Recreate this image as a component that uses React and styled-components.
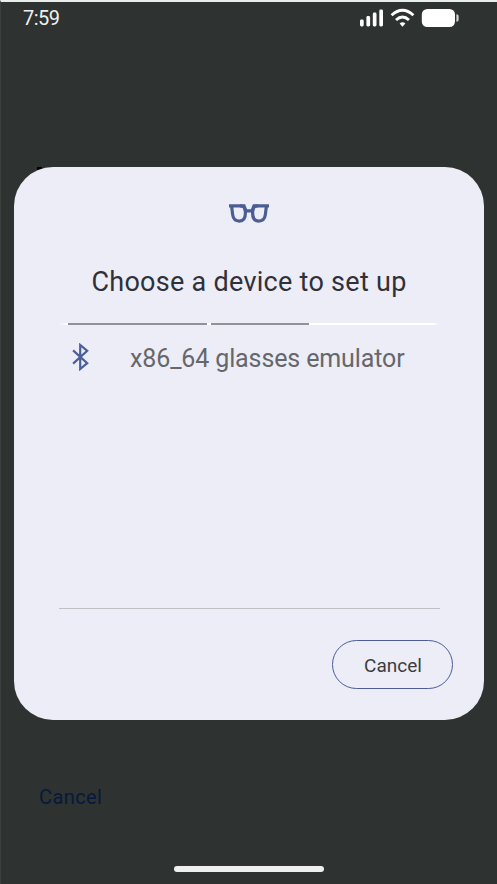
import React from 'react';
import styled, { createGlobalStyle } from 'styled-components';

const App = () => {
  return (
    <>
      <GlobalStyle />
      <Screen>
        <StatusBar>
          <Clock>7:59</Clock>
          <StatusIcons />
        </StatusBar>
        <Dialog role="dialog">
          <GlassesIcon />
          <Title>Choose a device to set up</Title>
          <Progress>
            <Segment $width="139px" />
            <Segment $width="98px" />
          </Progress>
          <DeviceList>
            <Device>
              <BluetoothIcon />
              <DeviceName>x86_64 glasses emulator</DeviceName>
            </Device>
          </DeviceList>
          <Actions>
            <CancelButton>Cancel</CancelButton>
          </Actions>
        </Dialog>
        <Footer>
          <BackLink>Cancel</BackLink>
        </Footer>
        <HomeBar />
      </Screen>
    </>
  );
};

//Icons
const StatusIcons = () => (
  <svg width="102" height="20" viewBox="0 0 102 20" fill="#fff">
    <rect x="1" y="11.5" width="3.7" height="7" rx="1.4" />
    <rect x="7.4" y="8" width="3.7" height="10.5" rx="1.4" />
    <rect x="13.8" y="4.5" width="3.7" height="14" rx="1.4" />
    <rect x="20.3" y="1.5" width="3.7" height="17" rx="1.4" />
    <g fill="none" stroke="#fff" strokeWidth="2.9">
      <path d="M32.6 7.2Q43.5-2.8 54.4 7.2" />
      <path d="M37 12Q43.5 6 50 12" />
    </g>
    <path d="M40.6 15.6Q43.5 12.8 46.4 15.6L43.5 18.7Z" />
    <rect x="62.8" y="1" width="33.2" height="18" rx="5.5" />
    <path d="M97.4 6.2Q99.6 6.2 99.6 8V12Q99.6 13.8 97.4 13.8Z" fill="#d5d8d7" />
  </svg>
);

const GlassesIcon = () => (
  <svg width="42" height="22" viewBox="0 0 42 22" fill="none" stroke="#4b5d93" strokeWidth="3.2">
    <path d="M1 3.8H12.6C16 3.8 17.4 5.6 17.4 9V11C17.4 16.4 15 19.1 11.4 19.1C7.8 19.1 5.2 17 4.6 12.4L3.6 3.8" />
    <path d="M41 3.8H29.4C26 3.8 24.6 5.6 24.6 9V11C24.6 16.4 27 19.1 30.6 19.1C34.2 19.1 36.8 17 37.4 12.4L38.4 3.8" />
    <path d="M12 3.8H16L17.4 8.8H24.6L26 3.8H30" />
  </svg>
);

const BluetoothIcon = () => (
  <svg width="18" height="28" viewBox="0 0 18 28" fill="none" stroke="#4b5f98" strokeWidth="2.2">
    <path d="M1.1 7.4L15.2 20.2L8.2 26V2L15.2 7.8L1.1 20.6" />
  </svg>
);

const GlobalStyle = createGlobalStyle`
  * {
    box-sizing: border-box;
  }

  body {
    margin: 0;
    font-family: Roboto, "Liberation Sans", sans-serif;
    overflow: hidden;
  }
`;

const Screen = styled.div`
  height: 884px;
  display: flex;
  flex-direction: column;
  isolation: isolate;
  background: #2e3231;
  border-top: 2px solid #e9eeed;
  border-left: 1px solid #3b3f3e;
`;

const StatusBar = styled.header`
  height: 165px;
  flex: none;
  display: flex;
  align-items: flex-start;
  justify-content: space-between;
  padding: 6px 36px 0 22px;
`;

const Clock = styled.span`
  color: #eef0ef;
  font-size: 20px;
  line-height: 20px;
  letter-spacing: -0.5px;
`;

const Dialog = styled.main`
  position: relative;
  width: 470px;
  height: 553px;
  flex: none;
  display: flex;
  flex-direction: column;
  align-items: center;
  margin-left: 13px;
  padding: 35px 44px 0;
  border-radius: 39px;
  background: #ecedf6;

  /* edge of the page heading behind the dialog */
  &::before {
    content: "";
    position: absolute;
    z-index: -1;
    top: 0;
    left: 23px;
    width: 5px;
    height: 3px;
    background: #000;
  }
`;

const Title = styled.h1`
  margin: 41px 0 0;
  color: #303138;
  font-size: 27px;
  font-weight: 400;
  line-height: 34px;
  letter-spacing: 0.28px;
  white-space: nowrap;
`;

const Progress = styled.div`
  width: 382px;
  height: 2px;
  flex: none;
  display: flex;
  gap: 4px;
  margin-top: 24px;
  padding-left: 10px;
  background: linear-gradient(to right, #ecedf6, #fff 10px, #fff 376px, #ecedf6);
`;

const Segment = styled.div`
  width: ${(props) => props.$width};
  background: #919298;
`;

const DeviceList = styled.ul`
  width: 381px;
  height: 284px;
  flex: none;
  margin: 0 0 0 1px;
  padding: 18px 0 0 13px;
  list-style: none;
  border-bottom: 1px solid #bfc0c6;
`;

const Device = styled.li`
  display: flex;
  align-items: flex-start;
  gap: 40px;
`;

const DeviceName = styled.span`
  color: #66676c;
  font-size: 25px;
  line-height: 32px;
  letter-spacing: -0.12px;
  white-space: nowrap;
`;

const Actions = styled.div`
  width: 395px;
  display: flex;
  justify-content: flex-end;
  align-self: flex-start;
  margin-top: 31px;
`;

const CancelButton = styled.button`
  width: 121px;
  height: 49px;
  padding: 1px 0 0 1px;
  border: 1.5px solid #4b5c99;
  border-radius: 25px;
  background: transparent;
  color: #3b3c42;
  font-family: inherit;
  font-size: 19px;
`;

const Footer = styled.footer`
  flex: 1;
  padding: 65px 0 0 38px;
`;

const BackLink = styled.span`
  color: #06193b;
  font-size: 20px;
  line-height: 24px;
  letter-spacing: 0.4px;
`;

const HomeBar = styled.div`
  width: 150px;
  height: 6px;
  flex: none;
  margin: 0 0 12px 173px;
  border-radius: 3px;
  background: #eeefee;
`;

export default App;
